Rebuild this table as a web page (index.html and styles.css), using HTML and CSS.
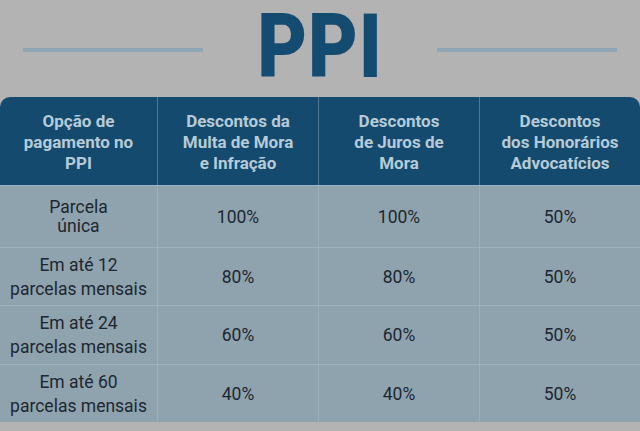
FILE: index.html
```html
<!DOCTYPE html>
<html lang="pt-BR">
<head>
<meta charset="utf-8">
<title>PPI</title>
<link rel="stylesheet" href="styles.css">
</head>
<body>
<div class="page">
  <header class="title-bar">
    <span class="rule"></span>
    <h1 class="title"><span class="title-text">PPI</span></h1>
    <span class="rule"></span>
  </header>
  <div class="table">
    <div class="row head">
      <div class="cell">Opção de<br>pagamento no<br>PPI</div>
      <div class="cell">Descontos da<br>Multa de Mora<br>e Infração</div>
      <div class="cell">Descontos<br>de Juros de<br>Mora</div>
      <div class="cell">Descontos<br>dos Honorários<br>Advocatícios</div>
    </div>
    <div class="row body r1">
      <div class="cell first tight">Parcela<br>única</div>
      <div class="cell">100%</div>
      <div class="cell">100%</div>
      <div class="cell">50%</div>
    </div>
    <div class="row body r2">
      <div class="cell first">Em até 12<br>parcelas mensais</div>
      <div class="cell">80%</div>
      <div class="cell">80%</div>
      <div class="cell">50%</div>
    </div>
    <div class="row body r3">
      <div class="cell first">Em até 24<br>parcelas mensais</div>
      <div class="cell">60%</div>
      <div class="cell">60%</div>
      <div class="cell">50%</div>
    </div>
    <div class="row body r4">
      <div class="cell first">Em até 60<br>parcelas mensais</div>
      <div class="cell">40%</div>
      <div class="cell">40%</div>
      <div class="cell">50%</div>
    </div>
  </div>
</div>
</body>
</html>
```
FILE: styles.css
```css
html, body {
  margin: 0;
  padding: 0;
  background: #b3b3b3;
}
.page {
  width: 640px;
  height: 431px;
  overflow: hidden;
  font-family: Roboto, "Liberation Sans", sans-serif;
}
.title-bar {
  height: 97px;
  display: flex;
  align-items: flex-start;
  justify-content: center;
  gap: 44px;
}
.rule {
  width: 180px;
  height: 4px;
  background: #8fa7b5;
  margin-top: 48px;
}
.title {
  margin: 0;
  font-family: Roboto, "Liberation Sans", sans-serif;
  font-weight: 900;
  font-size: 89px;
  line-height: 94px;
  color: #144b70;
}
.title-text {
  display: block;
  white-space: nowrap;
  letter-spacing: 1px;
  transform: scaleX(0.86);
  transform-origin: center;
}
.table {
  display: flex;
  flex-direction: column;
}
.row {
  display: grid;
  grid-template-columns: 157px 161px 161px 161px;
}
.head {
  height: 88px;
  background: #144a6e;
  border-radius: 10px 10px 0 0;
}
.head .cell {
  color: #b6cbd7;
  font-weight: 700;
  font-size: 17px;
  line-height: 21px;
  padding-top: 2px;
}
.head .cell + .cell {
  border-left: 1px solid #4f7893;
}
.cell {
  display: flex;
  align-items: center;
  justify-content: center;
  text-align: center;
}
.body {
  background: #8fa3ae;
  border-top: 1px solid #9fb1ba;
}
.body .cell {
  color: #1d2731;
  font-size: 17.5px;
  line-height: 24px;
}
.body .cell + .cell {
  border-left: 1px solid #9cafb8;
}
.body .first.tight {
  line-height: 19px;
}
.r1 { height: 61px; }
.r2 { height: 57px; }
.r3 { height: 58px; }
.r4 { height: 57px; }
```
